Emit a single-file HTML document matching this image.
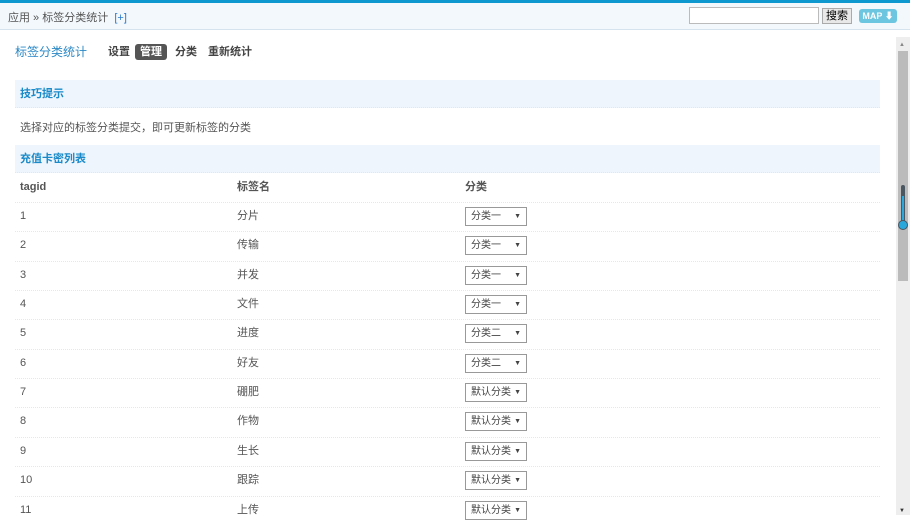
<!DOCTYPE html>
<html><head><meta charset="utf-8"><style>
*{margin:0;padding:0;box-sizing:border-box}
body{width:910px;height:515px;overflow:hidden;background:#fff;font-family:"Liberation Sans","Noto Sans CJK SC",sans-serif;font-size:12px;color:#333;position:relative}
.abs{position:absolute;line-height:14px}
.top{left:0;top:0;width:910px;height:3px;background:#0d98d0}
.hdr{left:0;top:3px;width:910px;height:27px;background:#f2f8fc;border-bottom:1px solid #d5e3ee}
.crumb{left:8px;top:11px;font-size:11px;color:#555;white-space:nowrap}
.crumb span{color:#2b7acb}
.srch{left:689px;top:7px;width:130px;height:17px;border:1px solid #bbb;background:#fff}
.btn{left:822px;top:8px;width:30px;height:16px;border:1px solid #aaa;background:#e8e8e8;font-size:11px;text-align:center;line-height:14px;color:#000}
.map{left:859px;top:9px;width:38px;height:14px;background:#6cc6e0;border-radius:3px;color:#fff;font-size:9px;font-weight:bold;text-align:center;line-height:14px}
.title{left:15px;top:45px;font-size:12px;color:#2b88c6}
.nav{top:45px;font-size:11px;font-weight:bold;color:#444}
.cur{left:135px;top:44px;width:32px;height:16px;background:#555;border-radius:3px;color:#fff;text-align:center;font-size:11px;font-weight:bold;line-height:16px}
.bar{left:15px;width:865px;height:28px;background:#eef5fc;border-bottom:1px dotted #dde8f0}
.bar b{position:absolute;left:5px;top:8px;font-size:11px;color:#1a8ac9}
.line{left:15px;width:865px;border-top:1px dotted #dfe9f0}
.c{font-size:11px;color:#555}
.sel{left:465px;width:62px;height:19px;border:1px solid #999;background:#fff;font-size:10px;line-height:17px;padding-left:5px;color:#444}
.sel:after{content:"▼";position:absolute;right:5px;top:0;font-size:7px}
.sb{left:896px;top:37px;width:14px;height:478px;background:#eee}
.thumb{left:898px;top:51px;width:10px;height:230px;background:#bbb}
</style></head><body>
<div class="abs top"></div>
<div class="abs hdr"></div>
<div class="abs crumb">应用 » 标签分类统计 &nbsp;<span>[+]</span></div>
<div class="abs srch"></div>
<div class="abs btn">搜索</div>
<div class="abs map">MAP ⬇</div>
<div class="abs title">标签分类统计</div>
<div class="abs nav" style="left:108px">设置</div>
<div class="abs cur">管理</div>
<div class="abs nav" style="left:175px">分类</div>
<div class="abs nav" style="left:208px">重新统计</div>
<div class="abs bar" style="top:80px"><b style="top:7px">技巧提示</b></div>
<div class="abs c" style="left:20px;top:121px">选择对应的标签分类提交，即可更新标签的分类</div>
<div class="abs bar" style="top:145px"><b style="top:7px">充值卡密列表</b></div>
<div class="abs c" style="left:20px;top:180px;font-weight:bold">tagid</div>
<div class="abs c" style="left:237px;top:180px;font-weight:bold">标签名</div>
<div class="abs c" style="left:465px;top:180px;font-weight:bold">分类</div>
<div id="rows"></div>
<div class="abs sb"></div>
<div class="abs thumb"></div>
<div class="abs" style="left:899px;top:38px;font-size:6px;color:#888">▲</div>
<div class="abs" style="left:899px;top:504px;font-size:6px;color:#333">▼</div>
<svg class="abs" style="left:898px;top:184px" width="12" height="50"><rect x="3" y="1" width="4" height="40" rx="2" fill="#4a5660"/><rect x="4" y="12" width="2" height="28" fill="#2aa8dc"/><circle cx="5" cy="41" r="4.5" fill="#2aa8dc" stroke="#4a5660"/></svg>
<script>
var d=[["1","分片","分类一"],["2","传输","分类一"],["3","并发","分类一"],["4","文件","分类一"],["5","进度","分类二"],["6","好友","分类二"],["7","硼肥","默认分类"],["8","作物","默认分类"],["9","生长","默认分类"],["10","跟踪","默认分类"],["11","上传","默认分类"]];
var h="";
for(var i=0;i<d.length;i++){var t=202+i*29.35;
h+='<div class="abs line" style="top:'+t+'px"></div>';
h+='<div class="abs c" style="left:20px;top:'+(t+7)+'px">'+d[i][0]+'</div>';
h+='<div class="abs c" style="left:237px;top:'+(t+7)+'px">'+d[i][1]+'</div>';
h+='<div class="abs sel" style="top:'+(t+5)+'px">'+d[i][2]+'</div>';}
document.getElementById("rows").innerHTML=h;
</script>
</body></html>
